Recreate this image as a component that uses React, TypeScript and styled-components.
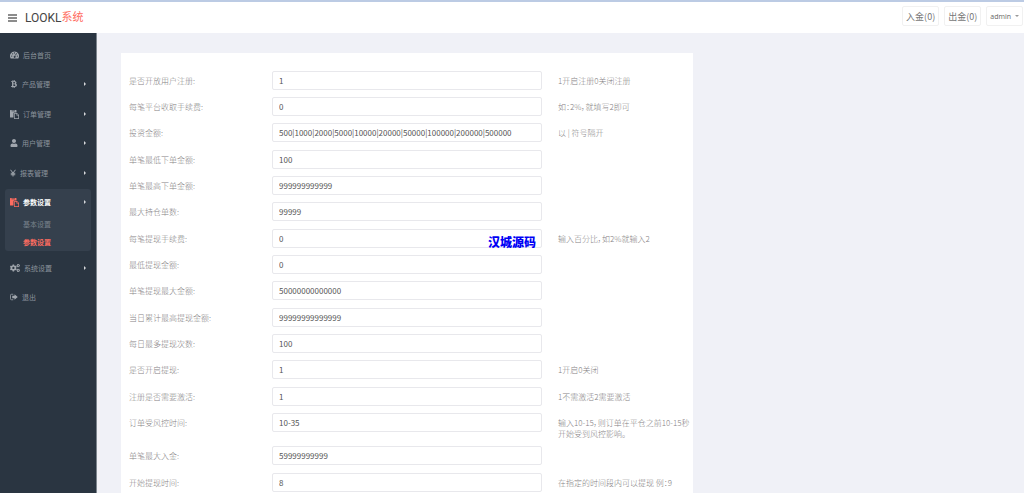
import React from "react";
import styled, { createGlobalStyle } from "styled-components";
import { FaBtc, FaCogs, FaUser } from "react-icons/fa";

const GlobalStyle = createGlobalStyle`
  * { box-sizing: border-box; }
  body {
    margin: 0;
    background: #f0f1f7;
    color: #999;
    font-family: "Noto Sans CJK SC", sans-serif;
    font-size: 8px;
  }
  button, input { font-family: inherit; }
`;

const Page = styled.div`
  display: flex;
  flex-direction: column;
  height: 100vh;
  overflow: hidden;
`;

const Header = styled.header`
  display: flex;
  align-items: center;
  flex: none;
  height: 33px;
  padding: 0 1px 0 8px;
  border-top: 2px solid #bccbe4;
  background: #fff;
`;

const MenuToggle = styled.button`
  display: flex;
  flex-direction: column;
  gap: 1px;
  width: 9px;
  padding: 0;
  border: 0;
  background: none;
`;

const ToggleBar = styled.span`
  height: 2px;
  background: #8c8c8c;
`;

const Brand = styled.a`
  display: flex;
  margin-left: 8px;
  color: #444;
  font-family: Roboto, "Noto Sans CJK SC", sans-serif;
  font-size: 12px;
  line-height: 16px;
  text-decoration: none;
`;

const BrandAccent = styled.span`
  color: #ff6c60;
  font-size: 11px;
`;

const HeaderActions = styled.div`
  display: flex;
  gap: 5px;
  margin: 0 0 3px auto;
`;

const HeaderButton = styled.button<{ $small?: boolean }>`
  display: flex;
  align-items: center;
  justify-content: center;
  gap: 4px;
  height: 20px;
  padding: 0 3px;
  border: 1px solid #f1f1f1;
  border-radius: 2px;
  background: #fff;
  color: ${(p) => (p.$small ? "#666" : "#777")};
  font-family: ${(p) => (p.$small ? '"Open Sans", sans-serif' : "inherit")};
  font-size: ${(p) => (p.$small ? 7 : 9)}px;
  white-space: nowrap;
`;

const CaretDown = styled.span`
  border: 2px solid transparent;
  border-top-color: #999;
  border-bottom: 0;
`;

const Body = styled.div`
  display: flex;
  flex: 1;
  min-height: 0;
`;

const Sidebar = styled.nav`
  flex: none;
  width: 97px;
  padding: 9px 5px;
  border-right: 1px solid #7d858d;
  background: #2a3541;
`;

const MenuList = styled.ul`
  margin: 0;
  padding: 0;
  list-style: none;
`;

const MenuItem = styled.li<{ $active?: boolean }>`
  margin-bottom: 3px;
  border-radius: 3px;
  background: ${(p) => (p.$active ? "#35404d" : "transparent")};
  &:nth-child(even) { margin-bottom: 4px; }
`;

const MenuLink = styled.a<{ $active?: boolean }>`
  display: flex;
  align-items: center;
  gap: 4px;
  height: 26px;
  padding: 0 5px;
  color: ${(p) => (p.$active ? "#fff" : "#8b939c")};
  font-size: 7px;
  font-weight: ${(p) => (p.$active ? 700 : 400)};
  text-decoration: none;
  svg { flex: none; color: ${(p) => (p.$active ? "#ff6c60" : "#a0a6ad")}; }
`;

const CaretRight = styled.span`
  margin-left: auto;
  border: 2px solid transparent;
  border-left-color: #d5d8db;
  border-right: 0;
`;

const SubLink = styled.a<{ $active?: boolean }>`
  display: flex;
  align-items: center;
  height: 18px;
  padding-left: 18px;
  color: ${(p) => (p.$active ? "#ff6c60" : "#79828c")};
  font-size: 7px;
  font-weight: ${(p) => (p.$active ? 700 : 400)};
  text-decoration: none;
`;

const Main = styled.main`
  display: grid;
  grid-template-columns: minmax(0, 572fr) minmax(0, 307fr);
  flex: 1;
  min-width: 0;
  padding: 20px 24px 0;
`;

const Card = styled.form`
  padding-top: 18px;
  background: #fff;
`;

const FormRow = styled.div`
  display: grid;
  grid-template-columns: minmax(0, 1fr) minmax(0, 2fr) minmax(0, 1fr);
  align-items: start;
  padding-bottom: 7px;
  &:nth-child(3n) { padding-bottom: 8px; }
`;

const Label = styled.label`
  padding: 4px 0 0 8px;
  color: #857f84;
  font-weight: 300;
  line-height: 11px;
`;

const Field = styled.div`
  position: relative;
  padding: 0 8px;
`;

const TextInput = styled.input`
  display: block;
  width: 100%;
  height: 19px;
  padding: 0 6px;
  border: 1px solid #e8e8ec;
  border-radius: 2px;
  outline: 0;
  background: #fff;
  color: #555;
  font-size: 8px;
`;

const Hint = styled.p`
  margin: 0;
  padding: 4px 0 0 8px;
  color: #857f84;
  font-feature-settings: "palt";
  font-weight: 300;
  line-height: 11px;
`;

const Watermark = styled.span`
  position: absolute;
  right: 14px;
  bottom: -1px;
  color: #0000f5;
  font-size: 12px;
  font-weight: 900;
  line-height: 14px;
  pointer-events: none;
`;

const GaugeIcon = () => (
  <svg width="9" height="8" viewBox="0 0 18 16" aria-hidden="true">
    <path
      fill="currentColor"
      fillRule="evenodd"
      d="M9 1a9 9 0 0 0-7.6 13.8c.2.3.4.4.8.4h13.6c.4 0 .6-.1.8-.4A9 9 0 0 0 9 1ZM3.5 9a1.2 1.2 0 1 0 0 2.4 1.2 1.2 0 0 0 0-2.4Zm1.8-4.5a1.2 1.2 0 1 0 0 2.4 1.2 1.2 0 0 0 0-2.4ZM9 2.700a1.2 1.2 0 1 0 0 2.4 1.2 1.2 0 0 0 0-2.4Zm3.900 1.800a1.2 1.2 0 1 0 0 2.4 1.2 1.2 0 0 0 0-2.4ZM14.600 9a1.2 1.2 0 1 0 0 2.4 1.2 1.2 0 0 0 0-2.4ZM10.300 6.200l-1 3.600a1.900 1.900 0 1 0 1.100.3l1-3.600Z"
    />
  </svg>
);

const PasteIcon = () => (
  <svg width="9" height="9" viewBox="0 0 18 18" aria-hidden="true">
    <path
      fill="currentColor"
      fillRule="evenodd"
      d="M1 0h11a1 1 0 0 1 1 1v4H8.500a1.500 1.500 0 0 0-1.500 1.500V15H1a1 1 0 0 1-1-1V1a1 1 0 0 1 1-1Zm2 1.200v1.200h7V1.200Z"
    />
    <path
      fill="currentColor"
      fillRule="evenodd"
      d="M9 6h5l4 4v7a1 1 0 0 1-1 1H9a1 1 0 0 1-1-1V7a1 1 0 0 1 1-1Zm.4 1.400v9.200h7.200V11H13V7.400Zm4.800.4v2h2Z"
    />
  </svg>
);

const YenIcon = () => (
  <svg width="6" height="8" viewBox="0 0 12 16" aria-hidden="true">
    <path
      fill="none"
      stroke="currentColor"
      strokeWidth="2"
      d="M1 1.500 6 8l5-6.500M6 8v7M1.500 8.500h9M1.500 11.500h9"
    />
  </svg>
);

const SignOutIcon = () => (
  <svg width="8" height="8" viewBox="0 0 16 16" aria-hidden="true">
    <path fill="none" stroke="currentColor" strokeWidth="1.600" d="M6.500 2.500H3a2 2 0 0 0-2 2v7a2 2 0 0 0 2 2h3.500" />
    <path fill="currentColor" d="M4.500 5.700H9V2.500L15.500 8 9 13.500v-3.200H4.500Z" />
  </svg>
);

type MenuEntry = {
  text: string;
  icon: React.ReactNode;
  leaf?: boolean;
  children?: { text: string; active?: boolean }[];
};

const menu: MenuEntry[] = [
  { text: "后台首页", icon: <GaugeIcon />, leaf: true },
  { text: "产品管理", icon: <FaBtc size={8} /> },
  { text: "订单管理", icon: <PasteIcon /> },
  { text: "用户管理", icon: <FaUser size={8} /> },
  { text: "报表管理", icon: <YenIcon /> },
  {
    text: "参数设置",
    icon: <PasteIcon />,
    children: [{ text: "基本设置" }, { text: "参数设置", active: true }],
  },
  { text: "系统设置", icon: <FaCogs size={10} /> },
  { text: "退出", icon: <SignOutIcon />, leaf: true },
];

type Setting = { label: string; value: string; hint?: string; mark?: string };

const settings: Setting[] = [
  { label: "是否开放用户注册", value: "1", hint: "1开启注册0关闭注册" },
  { label: "每笔平台收取手续费", value: "0", hint: "如：2%，就填写2即可" },
  { label: "投资金额", value: "500|1000|2000|5000|10000|20000|50000|100000|200000|500000", hint: "以 | 符号隔开" },
  { label: "单笔最低下单金额", value: "100" },
  { label: "单笔最高下单金额", value: "999999999999" },
  { label: "最大持仓单数", value: "99999" },
  { label: "每笔提现手续费", value: "0", hint: "输入百分比，如2%就输入2", mark: "汉城源码" },
  { label: "最低提现金额", value: "0" },
  { label: "单笔提现最大金额", value: "50000000000000" },
  { label: "当日累计最高提现金额", value: "99999999999999" },
  { label: "每日最多提现次数", value: "100" },
  { label: "是否开启提现", value: "1", hint: "1开启0关闭" },
  { label: "注册是否需要激活", value: "1", hint: "1不需激活2需要激活" },
  { label: "订单受风控时间", value: "10-35", hint: "输入10-15，则订单在平仓之前10-15秒开始受到风控影响。" },
  { label: "单笔最大入金", value: "59999999999" },
  { label: "开始提现时间", value: "8", hint: "在指定的时间段内可以提现 例：9" },
];

export default function App() {
  return (
    <Page>
      <GlobalStyle />
      <Header>
        <MenuToggle type="button" aria-label="菜单">
          <ToggleBar />
          <ToggleBar />
          <ToggleBar />
        </MenuToggle>
        <Brand href="#">
          LOOKL<BrandAccent>系统</BrandAccent>
        </Brand>
        <HeaderActions>
          <HeaderButton type="button">入金(0)</HeaderButton>
          <HeaderButton type="button">出金(0)</HeaderButton>
          <HeaderButton type="button" $small>
            admin
            <CaretDown />
          </HeaderButton>
        </HeaderActions>
      </Header>
      <Body>
        <Sidebar>
          <MenuList>
            {menu.map((item) => (
              <MenuItem key={item.text} $active={!!item.children}>
                <MenuLink href="#" $active={!!item.children}>
                  {item.icon}
                  {item.text}
                  {!item.leaf && <CaretRight />}
                </MenuLink>
                {item.children && (
                  <MenuList>
                    {item.children.map((sub) => (
                      <li key={sub.text}>
                        <SubLink href="#" $active={sub.active}>
                          {sub.text}
                        </SubLink>
                      </li>
                    ))}
                  </MenuList>
                )}
              </MenuItem>
            ))}
          </MenuList>
        </Sidebar>
        <Main>
          <Card>
            {settings.map((s, i) => (
              <FormRow key={s.label}>
                <Label htmlFor={`setting-${i}`}>{s.label}:</Label>
                <Field>
                  <TextInput id={`setting-${i}`} defaultValue={s.value} />
                  {s.mark && <Watermark>{s.mark}</Watermark>}
                </Field>
                {s.hint && <Hint>{s.hint}</Hint>}
              </FormRow>
            ))}
          </Card>
        </Main>
      </Body>
    </Page>
  );
}
